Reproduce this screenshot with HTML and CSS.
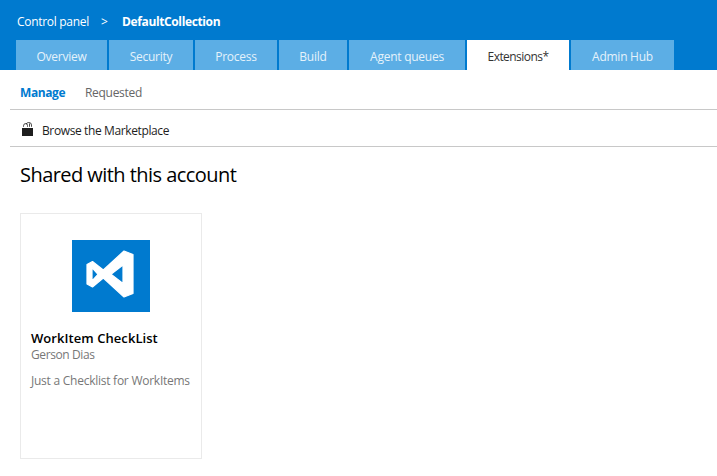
FILE: index.html
```html
<!DOCTYPE html>
<html lang="en">
<head>
<meta charset="utf-8">
<title>Extensions</title>
<link rel="stylesheet" href="styles.css">
</head>
<body>
<header class="header">
  <div class="breadcrumb"><span class="root">Control panel</span><span class="separator">&gt;</span><strong class="collection">DefaultCollection</strong></div>
  <nav class="tabs">
    <a class="tab"><span>Overview</span></a>
    <a class="tab"><span>Security</span></a>
    <a class="tab"><span>Process</span></a>
    <a class="tab"><span>Build</span></a>
    <a class="tab"><span>Agent queues</span></a>
    <a class="tab active"><span>Extensions*</span></a>
    <a class="tab"><span>Admin Hub</span></a>
  </nav>
</header>
<main class="content">
  <nav class="subnav"><a class="current">Manage</a><a class="other">Requested</a></nav>
  <div class="toolbar">
    <svg class="bag" width="11" height="14" viewBox="0 0 11 14"><path d="M0 6h11v8H0z" fill="#1e1e1e"/><path d="M1.500 4.800V3.800Q1.700 1.600 3.500 1.500Q5.500 1.500 5.500 3.500V4.800M4 2.200Q4.800.5 6.800.5Q9.500.5 9.500 3V4.800M7.500 1.500V4.800" fill="none" stroke="#1e1e1e" stroke-width=".8"/></svg>
    <span class="browse">Browse the Marketplace</span>
  </div>
  <h1 class="title">Shared with this account</h1>
  <article class="card">
    <svg class="logo" width="78" height="72" viewBox="0 0 78 72"><path d="M0 0h78v72H0z" fill="#007acf"/><path class="mark" d="M52 11L61 14.500V53.500L52 57L31.300 38L20.500 47L15 44V24.500L20.500 21.500L31.300 30ZM51 25L39 34.300L51 43.500ZM20 27.500V41L26 34.300Z"/></svg>
    <h2 class="name">WorkItem CheckList</h2>
    <p class="author">Gerson Dias</p>
    <p class="description">Just a Checklist for WorkItems</p>
  </article>
</main>
</body>
</html>
```
FILE: styles.css
```css
* { box-sizing: border-box; }
body {
  margin: 0;
  height: 476px;
  overflow: hidden;
  background: #fff;
  color: #1e1e1e;
  font: 12px/16px "Open Sans", "Noto Sans", sans-serif;
  white-space: nowrap;
}
h1, h2, p { margin: 0; }
.header { height: 70px; background: #007acf; color: #fff; }
.breadcrumb { display: flex; height: 40px; padding: 14px 0 0 17px; }
.root { width: 84px; letter-spacing: -0.3px; }
.separator { width: 21px; }
.collection { letter-spacing: -0.37px; }
.tabs {
  display: grid;
  grid-template-columns: 91px 84px 82px 68px 116px 102px 103px;
  gap: 2px;
  height: 30px;
  padding-left: 16px;
}
.tab {
  display: flex;
  justify-content: center;
  padding-top: 9px;
  background: #5caee5;
  color: #e5f2fb;
  letter-spacing: -0.25px;
}
.tab.active { background: #fff; color: #333; letter-spacing: -0.55px; }
.content { padding-left: 10px; }
.subnav { display: flex; height: 40px; padding: 15px 0 0 10px; border-bottom: 1px solid #c8c8c8; }
.current { width: 65px; color: #007acf; font-weight: 700; letter-spacing: -0.4px; }
.other { color: #666; letter-spacing: -0.3px; }
.toolbar { display: flex; height: 37px; padding: 12px 0 0 12px; border-bottom: 1px solid #c8c8c8; }
.bag { margin-right: 9px; }
.browse { margin-top: 1px; letter-spacing: -0.38px; }
.title { padding: 14px 0 0 10px; color: #000; font-size: 20px; font-weight: 400; line-height: 28px; letter-spacing: -0.55px; }
.card { width: 182px; height: 246px; margin: 24px 0 0 10px; padding: 26px 10px 0; border: 1px solid #eaeaea; }
.logo { display: block; margin-left: 41px; }
.mark { fill: #fff; fill-rule: evenodd; stroke: #fff; stroke-width: 1.2px; stroke-linejoin: round; filter: blur(0.4px); }
.name { margin-top: 18px; color: #000; font-size: 13px; font-weight: 600; line-height: 17px; letter-spacing: 0.06px; }
.author { color: #777; letter-spacing: -0.4px; }
.description { margin-top: 10px; color: #777; letter-spacing: -0.25px; }
```
